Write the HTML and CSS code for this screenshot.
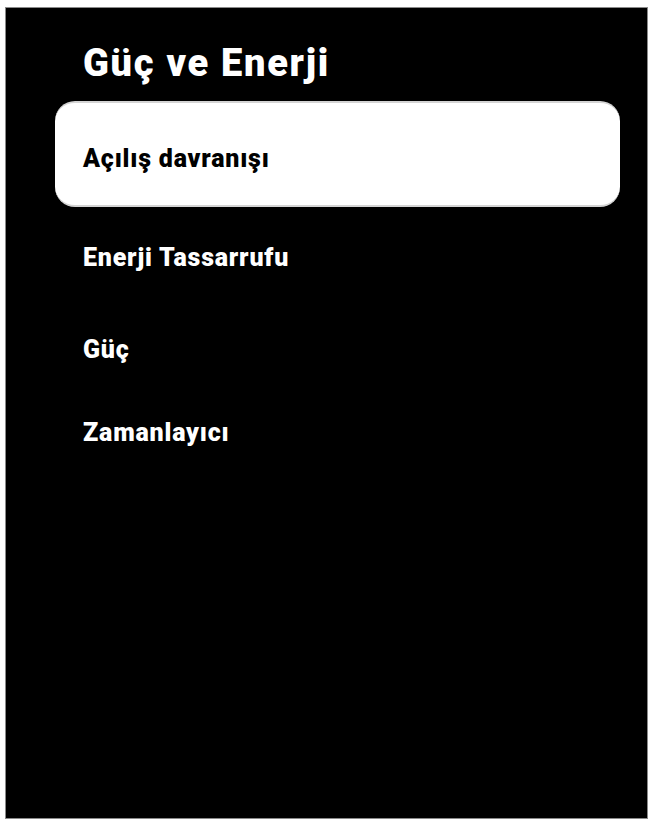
FILE: index.html
```html
<!DOCTYPE html>
<html lang="tr">
<head>
<meta charset="utf-8">
<title>Güç ve Enerji</title>
<link rel="stylesheet" href="styles.css">
</head>
<body>
<div class="panel">
  <div class="content">
    <h1 class="title">Güç ve Enerji</h1>
    <ul class="menu">
      <li class="item item-selected">Açılış davranışı</li>
      <li class="item item-2">Enerji Tassarrufu</li>
      <li class="item item-3">Güç</li>
      <li class="item item-4">Zamanlayıcı</li>
    </ul>
  </div>
</div>
</body>
</html>
```
FILE: styles.css
```css
html, body {
  margin: 0;
  padding: 0;
  background: #ffffff;
}
body {
  font-family: Roboto, "Liberation Sans", sans-serif;
}
.panel {
  box-sizing: border-box;
  margin: 7px 2px 0 5px;
  width: 643px;
  height: 812px;
  background: #000000;
  border: 1px solid #8a8a8a;
}
.content {
  padding: 36px 27px 0 49px;
}
.title {
  margin: 0;
  padding-left: 28px;
  font-size: 38px;
  line-height: 38px;
  font-weight: 900;
  letter-spacing: 1.7px;
  color: #ffffff;
}
.menu {
  list-style: none;
  margin: 19px 0 0 0;
  padding: 0;
  display: flex;
  flex-direction: column;
}
.item {
  padding-left: 28px;
  font-size: 25px;
  line-height: 25px;
  font-weight: 900;
  letter-spacing: 0.8px;
  color: #ffffff;
}
.item-selected {
  box-sizing: border-box;
  height: 106px;
  padding-top: 43px;
  background: #ffffff;
  color: #000000;
  border-radius: 20px;
  border-top: 2px solid #d4d4d4;
  border-bottom: 2px solid #d4d4d4;
}
.item-2 { margin-top: 38px; }
.item-3 { margin-top: 67px; }
.item-4 { margin-top: 58px; }
```
